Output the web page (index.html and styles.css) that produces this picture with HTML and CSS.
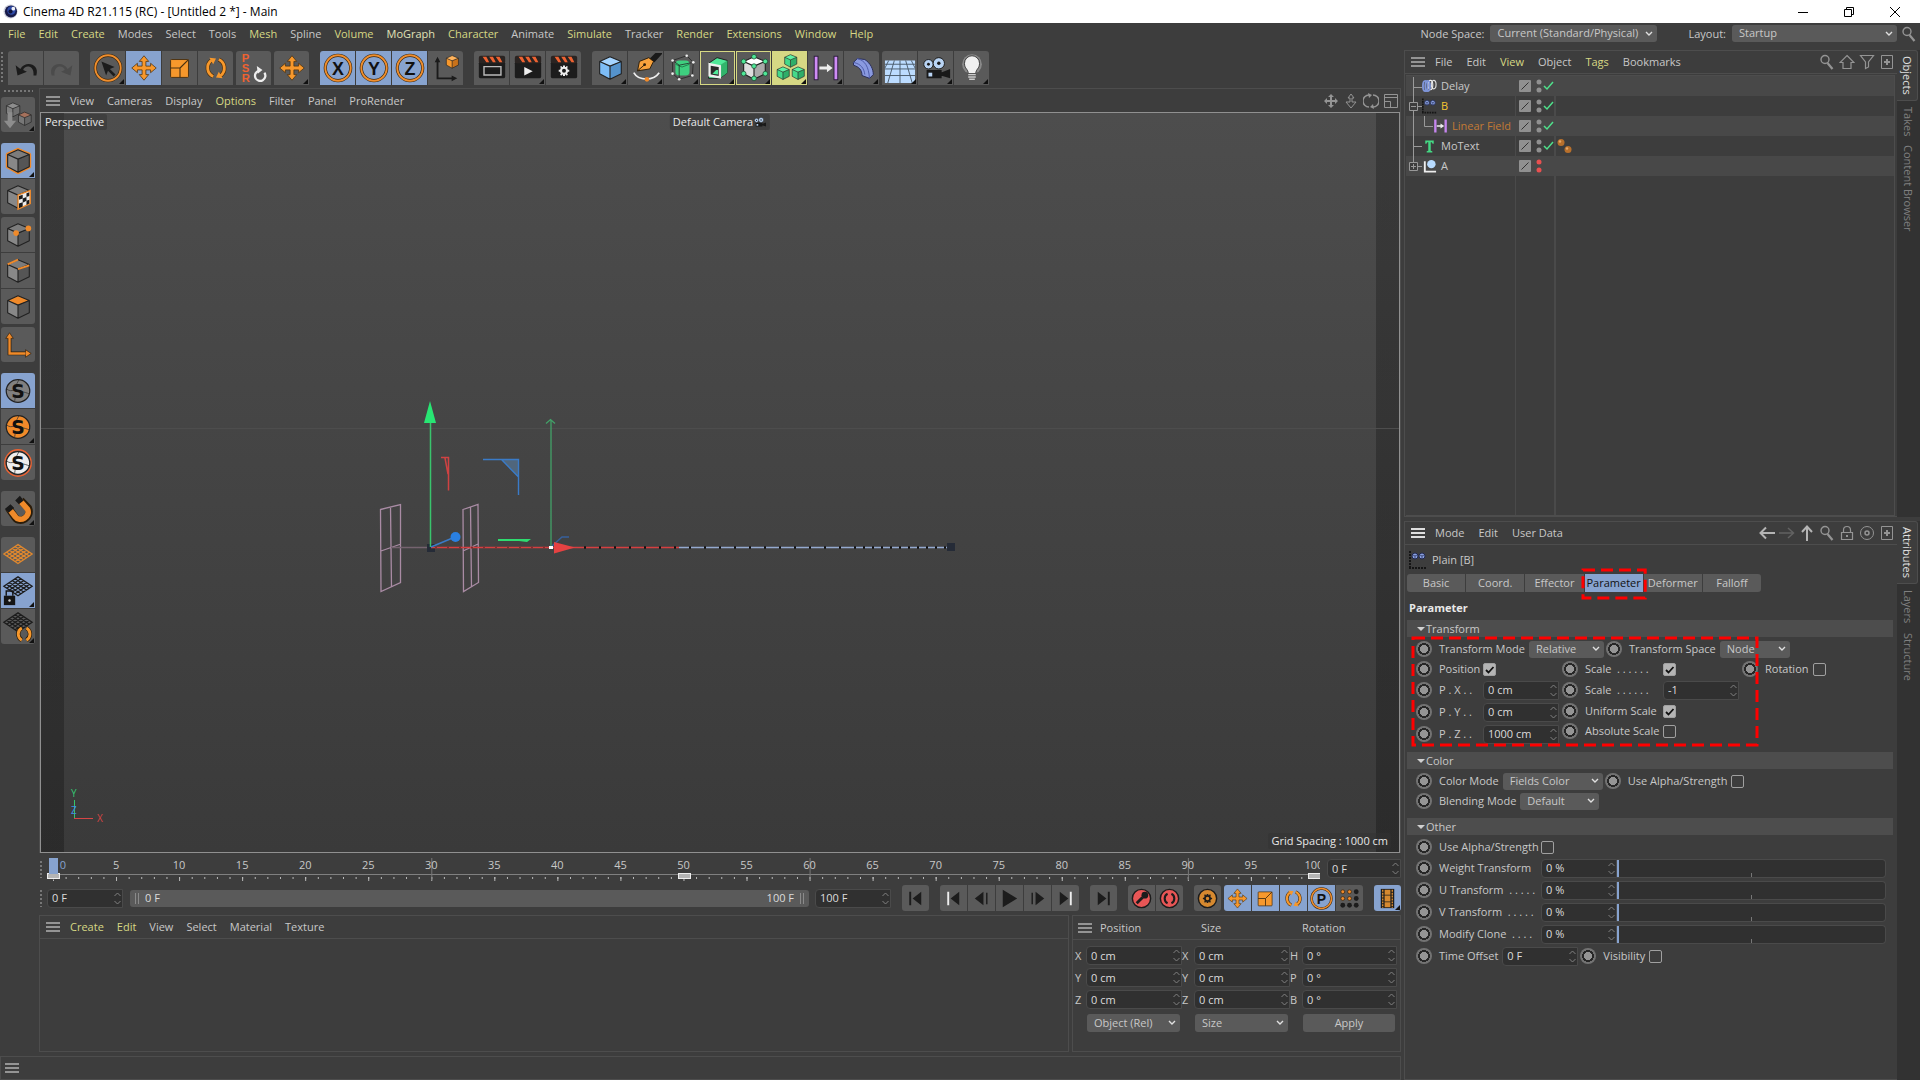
FILE: index.html
```
<!DOCTYPE html>
<html lang="en">
<head>
    <meta charset="UTF-8">
    <meta name="viewport" content="width=device-width, initial-scale=1.0">
    <title>Cinema 4D R21.115 (RC) - [Untitled 2 *] - Main</title>
    <link rel="stylesheet" href="styles.css">
</head>
<body>
    <!-- Shared icons -->
    <svg class="sprite" aria-hidden="true">
        <symbol id="cube" viewBox="0 0 34 34">
            <path d="M6 10 17 5l12 5v13l-12 6-11-6z" fill="none" stroke="var(--rim, none)" stroke-width="4" stroke-linejoin="round"/>
            <path d="M6 10 17 5l12 5-12 5z" fill="var(--top)"/>
            <path d="M6 10l11 5v14L6 23z" fill="var(--left)"/>
            <path d="M17 15l12-5v13l-12 6z" fill="var(--right)"/>
            <path d="M6 10 17 5l12 5v13l-12 6-11-6zM6 10l11 5 12-5M17 15v14" fill="none" stroke="#222" stroke-width="1.2" stroke-linejoin="round"/>
        </symbol>
        <symbol id="move" viewBox="0 0 34 34">
            <path d="M17 4l5 6h-3v5h5v-3l6 5-6 5v-3h-5v5h3l-5 6-5-6h3v-5h-5v3l-6-5 6-5v3h5v-5h-3z" fill="#f7982c" stroke="#4a3010" stroke-width=".8" stroke-linejoin="round"/>
        </symbol>
        <symbol id="scale" viewBox="0 0 34 34">
            <rect x="7" y="8" width="19" height="19" rx="1" fill="#f7982c" stroke="#4a3010"/>
            <path d="M7 17h10v10M17 17l9-9" fill="none" stroke="#4a3010" stroke-width="1.2"/>
        </symbol>
        <symbol id="rotate" viewBox="0 0 34 34">
            <path d="M14 26a10 10 0 0 1-2-17M20 8a10 10 0 0 1 2 17" fill="none" stroke="#4a3010" stroke-width="4.4"/>
            <path d="M14 26a10 10 0 0 1-2-17M20 8a10 10 0 0 1 2 17" fill="none" stroke="#f7982c" stroke-width="3"/>
            <path d="M10 6l7 1-3 6zM24 28l-7-1 3-6z" fill="#f7982c"/>
        </symbol>
        <symbol id="ring" viewBox="0 0 34 34">
            <circle cx="17" cy="17" r="13.5" fill="none" stroke="#3a2811" stroke-width="3.4"/>
            <circle cx="17" cy="17" r="13.5" fill="none" stroke="#ef8e2e" stroke-width="2"/>
        </symbol>
        <symbol id="corner" viewBox="0 0 5 5"><path d="M5 0v5H0z" fill="#111"/></symbol>
        <symbol id="clapper" viewBox="0 0 34 34">
            <rect x="3" y="10" width="28" height="18" rx="2" fill="#1c1c1c"/>
            <rect x="3" y="4" width="28" height="8" rx="2" fill="#2a2422"/>
            <path d="M7 5h4l3 6h-3zM14 5h4l3 6h-3zM21 5h4l3 6h-3z" fill="#ee6231"/>
        </symbol>
        <symbol id="gear" viewBox="0 0 20 20">
            <path d="M8.500 2h3v3h-3zM8.500 15h3v3h-3zM4 4l2-1.500 2 3-2 1.500zM12 5.500l2-3L16 4l-2 3zM2 8.500h4v3H2zM14 8.500h4v3h-4zM6 13l2 1.500-2 3L4 16zM14 13l2 3-2 1.500-2-3z"/>
            <circle cx="10" cy="10" r="4.500" fill="none" stroke="currentColor" stroke-width="3"/>
        </symbol>
        <symbol id="camera" viewBox="0 0 34 34">
            <path d="M7 19h16v9H7zM22 22l10-4v10l-10-3z" fill="#191919"/>
            <circle cx="9" cy="13" r="5" fill="#b9d4f4" stroke="#191919"/><circle cx="20" cy="12" r="6" fill="#b9d4f4" stroke="#191919"/>
            <circle cx="9" cy="13" r="1.500" fill="#191919"/><circle cx="20" cy="12" r="1.800" fill="#191919"/>
            <rect x="9" y="22" width="4" height="4" fill="#b9d4f4"/>
        </symbol>
        <symbol id="sball" viewBox="0 0 34 34">
            <circle cx="17" cy="17" r="14" fill="none" stroke="var(--halo, none)" stroke-width="1.500"/>
            <ellipse cx="17" cy="17" rx="12.500" ry="12" fill="var(--ball)" stroke="#222" stroke-width="1.300"/>
            <path d="M18 5c-2 4-3 5-3 8M5 15c3 2 5 2 8 1M21 18c3 0 5 1 8 2M14 21c0 3 0 5-1 8" fill="none" stroke="#333" stroke-width=".8"/>
        </symbol>
        <symbol id="grid" viewBox="0 0 34 34">
            <path d="M17 6l15 10-15 10L2 16zM20 8 5 18M23 10 8 20M26 12 11 22M29 14 14 24M14 8l15 10M11 10l15 10M8 12l15 10M5 14l15 10" fill="none" stroke="var(--grid, #1c1c1c)" stroke-width="1.400"/>
        </symbol>
        <symbol id="burger" viewBox="0 0 14 10"><path d="M0 1h14M0 5h14M0 9h14" stroke="currentColor" stroke-width="2"/></symbol>
        <symbol id="search" viewBox="0 0 16 16">
            <circle cx="6" cy="5.500" r="4" fill="none" stroke="currentColor" stroke-width="1.400"/><path d="M8.500 9l5 6" stroke="currentColor" stroke-width="2.200"/>
        </symbol>
        <symbol id="addbox" viewBox="0 0 16 16">
            <path d="M2.500 1.500h11v13h-11z" fill="none" stroke="currentColor"/><path d="M8 5v6M5 8h6" stroke="currentColor" stroke-width="2"/>
        </symbol>
        <symbol id="plain" viewBox="0 0 18 18">
            <path d="M1 0v18M0 17h18" stroke="#151515" stroke-width="2" stroke-dasharray="2 1"/>
            <circle cx="6" cy="5" r="3" fill="#89a0e0" stroke="#222a50"/><circle cx="13" cy="5" r="3" fill="#89a0e0" stroke="#222a50"/>
            <path d="M4 4l2 1 2-1M6 5v3M11 4l2 1 2-1M13 5v3" stroke="#222a50" stroke-width=".7" fill="none"/>
        </symbol>
        <symbol id="layer" viewBox="0 0 12 12"><rect width="12" height="12" rx="1" fill="#909090"/><path d="M2.500 9.500l7-7" stroke="#333"/></symbol>
        <symbol id="enabled" viewBox="0 0 18 14">
            <circle cx="3" cy="3" r="2.500" fill="#909090"/><circle cx="3" cy="11" r="2.500" fill="#909090"/><path d="M8 7l3 3 6-7" fill="none" stroke="#4fe08b" stroke-width="1.500"/>
        </symbol>
        <symbol id="step" viewBox="0 0 26 26"><path d="M19 6v14l-9-7z" fill="#1c1c1c"/><path d="M7.500 6v14" stroke="var(--bar, #1c1c1c)" stroke-width="2"/></symbol>
    </svg>

    <div class="app">
        <header class="titlebar">
            <svg class="logo" viewBox="0 0 16 16"><circle cx="8" cy="8" r="7.500" fill="#cdd0dc"/><circle cx="8.500" cy="8" r="6.500" fill="#171a48"/><circle cx="9" cy="7" r="4.500" fill="#2d49a6"/><circle cx="11" cy="5" r="2" fill="#f0f2fa"/><circle cx="8" cy="8" r="2.200" fill="#101338"/></svg>
            <span class="title">Cinema 4D R21.115 (RC) - [Untitled 2 *] - Main</span>
            <div class="window-buttons">
                <button aria-label="Minimize"><svg viewBox="0 0 10 10"><path d="M0 5.500h10"/></svg></button>
                <button aria-label="Restore"><svg viewBox="0 0 10 10"><path d="M.5 2.500h7v7h-7zM2.500 2.500v-2h7v7h-2"/></svg></button>
                <button aria-label="Close"><svg viewBox="0 0 10 10"><path d="M0 0l10 10M10 0 0 10"/></svg></button>
            </div>
        </header>

        <div class="menubar">
            <nav class="menu">
                <button class="used">File</button><button class="used">Edit</button><button class="used">Create</button><button>Modes</button><button>Select</button><button>Tools</button><button class="used">Mesh</button><button>Spline</button><button class="used">Volume</button><button class="used pale">MoGraph</button><button class="used">Character</button><button>Animate</button><button class="used">Simulate</button><button>Tracker</button><button class="used">Render</button><button class="used">Extensions</button><button class="used">Window</button><button class="used">Help</button>
            </nav>
            <div class="layout-bar">
                <label for="nodeSpace">Node Space:</label>
                <select id="nodeSpace" class="node-space"><option>Current (Standard/Physical)</option></select>
                <label for="layout" class="layout-label">Layout:</label>
                <select id="layout" class="layout-select"><option>Startup</option></select>
                <button class="icon" aria-label="Search"><svg><use href="#search"/></svg></button>
            </div>
        </div>

        <div class="workspace">
            <div class="left-side">
                <div class="toolbar">
                    <span class="grip tall"></span>
                    <div class="group">
                        <button aria-label="Undo"><svg viewBox="0 0 34 34"><path d="M6 14l2 11 10-4-4-2c1-5 12-6 11 6l3 0c4-13-12-16-17-7z" fill="#1b1b1b"/></svg></button>
                        <button aria-label="Redo"><svg viewBox="0 0 34 34"><path d="M28 14l-2 11-10-4 4-2c-1-5-12-6-11 6l-3 0c-4-13 12-16 17-7z" fill="#4b4b4b"/></svg></button>
                    </div>
                    <div class="group wide-gap">
                        <button aria-label="Live Selection"><svg viewBox="0 0 34 34"><use href="#ring"/><path d="M10 10l14 6-5 2 6 6-2 2-6-6-2 5z" fill="#1c1c1c"/></svg><svg class="corner"><use href="#corner"/></svg></button>
                        <button class="on" aria-label="Move"><svg><use href="#move"/></svg></button>
                        <button aria-label="Scale"><svg><use href="#scale"/></svg></button>
                        <button aria-label="Rotate"><svg><use href="#rotate"/></svg></button>
                    </div>
                    <div class="group">
                        <button aria-label="Reset PSR"><svg viewBox="0 0 34 34"><g class="psr"><text x="4" y="11">P</text><text x="4" y="21">S</text><text x="4" y="32">R</text></g><path d="M22 20a5.500 5.500 0 1 0 6 2" fill="none" stroke="#eee" stroke-width="2.400"/><path d="M20 15l6 4-5 4z" fill="#eee"/></svg></button>
                    </div>
                    <div class="group">
                        <button aria-label="Last Tool"><svg><use href="#move"/></svg><svg class="corner"><use href="#corner"/></svg></button>
                    </div>
                    <div class="group wide-gap">
                        <button class="on" aria-label="X Axis"><svg viewBox="0 0 34 34"><use href="#ring"/><text class="axis-letter" x="17" y="24">X</text></svg></button>
                        <button class="on" aria-label="Y Axis"><svg viewBox="0 0 34 34"><use href="#ring"/><text class="axis-letter" x="17" y="24">Y</text></svg></button>
                        <button class="on" aria-label="Z Axis"><svg viewBox="0 0 34 34"><use href="#ring"/><text class="axis-letter" x="17" y="24">Z</text></svg></button>
                        <button aria-label="Coordinate System"><svg viewBox="0 0 34 34"><path d="M8 10v18h16" fill="none" stroke="#1b1b1b" stroke-width="2"/><path d="M8 5l3 6H5zM29 28l-6-3v6z" fill="#1b1b1b"/><svg class="cube-orange" x="14" y="1" width="19" height="19"><use href="#cube"/></svg></svg></button>
                    </div>
                    <div class="group wide-gap">
                        <button aria-label="Render View"><svg viewBox="0 0 34 34"><use href="#clapper"/><path d="M8.500 15.500h18v9h-18z" fill="none" stroke="#bbb" stroke-width="1.500"/></svg></button>
                        <button aria-label="Render to Picture Viewer"><svg viewBox="0 0 34 34"><use href="#clapper"/><path d="M13 16v9l9-4.500z" fill="#eee"/></svg><svg class="corner"><use href="#corner"/></svg></button>
                        <button class="light-gear" aria-label="Render Settings"><svg viewBox="0 0 34 34"><use href="#clapper"/><use href="#gear" x="10" y="13" width="14" height="14"/></svg></button>
                    </div>
                    <div class="group wide-gap">
                        <button class="cube-blue" aria-label="Cube"><svg><use href="#cube"/></svg><svg class="corner"><use href="#corner"/></svg></button>
                        <button aria-label="Pen"><svg viewBox="0 0 34 34"><path d="M20 8l7-7h8l-9 10z" fill="#191919"/><path d="M8 20l2-10 10-4 5 4-4 8z" fill="#f7a13c" stroke="#2a1c0a"/><path d="M8 20l7-6" stroke="#2a1c0a"/><circle cx="15.500" cy="13.500" r="1.500" fill="#2a1c0a"/><path d="M4 22c5 9 21 9 27 0" fill="none" stroke="#eee" stroke-width="1.800"/><circle cx="18" cy="29" r="2.500" fill="#f08a2a"/></svg><svg class="corner"><use href="#corner"/></svg></button>
                        <button class="cube-green" aria-label="Subdivision Surface"><svg viewBox="0 0 34 34"><rect x="10" y="9" width="15" height="16" rx="4" fill="#3ecf7f"/><path d="M10 13l7 3 8-3" fill="none" stroke="#1d7f49"/><path d="M7 9l15-5 7 7-1 14-14 4-7-6zM7 9l7 5 15-3M14 14v15" fill="none" stroke="#222" stroke-width=".8"/><g fill="#eee"><circle cx="7" cy="9" r="1.400"/><circle cx="22" cy="4" r="1.400"/><circle cx="29" cy="11" r="1.400"/><circle cx="28" cy="25" r="1.400"/><circle cx="14" cy="29" r="1.400"/><circle cx="7" cy="23" r="1.400"/></g></svg><svg class="corner"><use href="#corner"/></svg></button>
                        <button class="cube-green hot" aria-label="Extrude"><svg viewBox="0 0 34 34"><path d="M7 12l9-6 11 3v13l-8 6H7z" fill="#4fe898" stroke="#1c1c1c"/><path d="M19 14l8-5v13l-8 6z" fill="#32b46c"/><path d="M8 13l11 2v12L8 25z" fill="#2a2a2a" stroke="#eee" stroke-width="2.500"/><path d="M11 23l4-4h2v5z" fill="#4fe898"/></svg><svg class="corner"><use href="#corner"/></svg></button>
                        <button class="cube-white hot" aria-label="Lattice"><svg viewBox="0 0 34 34"><use href="#cube"/><g fill="#4fe898" stroke="#1d4a30" stroke-width=".8"><circle cx="17" cy="5" r="2.500"/><circle cx="6" cy="10" r="2.500"/><circle cx="29" cy="10" r="2.500"/><circle cx="17" cy="15" r="2.500"/><circle cx="6" cy="23" r="2.500"/><circle cx="29" cy="23" r="2.500"/><circle cx="17" cy="28" r="2.500"/></g></svg><svg class="corner"><use href="#corner"/></svg></button>
                        <button class="cube-green hot filled" aria-label="Cloner"><svg viewBox="0 0 34 34"><use href="#cube" x="8" y="0" width="19" height="19"/><use href="#cube" x="0" y="13" width="19" height="19"/><use href="#cube" x="16" y="13" width="19" height="19"/></svg><svg class="corner"><use href="#corner"/></svg></button>
                        <button aria-label="Linear Field"><svg viewBox="0 0 34 34"><path d="M6.500 4v26M27.500 4v26" stroke="#2a1c38" stroke-width="5"/><path d="M6.500 5v24M27.500 5v24" stroke="#cf8cf5" stroke-width="3"/><path d="M10 15.500h8v-3l6 4.500-6 4.500v-3h-8z" fill="#eee"/></svg><svg class="corner"><use href="#corner"/></svg></button>
                        <button aria-label="Bend"><svg viewBox="0 0 34 34"><path d="M8 11l4-4 8 1c6 4 9 10 9 16l-4 4-8-3c0-6-3-9-9-11z" fill="#8a9ae0" stroke="#262b55"/><path d="M12 7c8 2 12 8 13 21M8 11c8 2 11 6 12 13" fill="none" stroke="#4c5aa8"/></svg><svg class="corner"><use href="#corner"/></svg></button>
                    </div>
                    <div class="group">
                        <button aria-label="Floor"><svg viewBox="0 0 34 34"><path d="M1 9h32v24H1z" fill="#bcdcff"/><path d="M1 13h32M1 18h32M1 25h32M17 9v24M11 9 4 33M23 9l7 24M5 9 1 17M29 9l4 8" stroke="#4a5a6a" fill="none"/></svg><svg class="corner"><use href="#corner"/></svg></button>
                        <button aria-label="Camera"><svg><use href="#camera"/></svg><svg class="corner"><use href="#corner"/></svg></button>
                        <button aria-label="Light"><svg viewBox="0 0 34 34"><circle cx="17" cy="13" r="10.500" fill="#8a8a8a"/><path d="M17 4a8 8 0 0 0-8 8c0 6 4 6 4 11h8c0-5 4-5 4-11a8 8 0 0 0-8-8z" fill="#f0f0f0" stroke="#3a3a3a"/><path d="M13 24h8M13 26.500h8M14 29h6" stroke="#ccc" stroke-width="1.500"/></svg><svg class="corner"><use href="#corner"/></svg></button>
                    </div>
                </div>

                <div class="work-row">
                    <aside class="tools">
                        <span class="grip wide"></span>
                        <div class="group apart">
                            <button class="cube-dim" aria-label="Make Editable"><svg viewBox="0 0 34 34"><use href="#cube" x="1" y="1" width="21" height="21"/><path d="M6 14h5v9h4l-6.500 8L2 23h4z" fill="#8d8d8d"/><g class="cube-faded"><use href="#cube" x="14" y="11" width="20" height="20"/></g></svg><svg class="corner"><use href="#corner"/></svg></button>
                        </div>
                        <div class="group">
                            <button class="on cube-rim" aria-label="Model"><svg><use href="#cube"/></svg><svg class="corner"><use href="#corner"/></svg></button>
                            <button aria-label="Texture"><svg viewBox="0 0 34 34"><use href="#cube"/><path d="M17 15l13-5v14l-13 6z" fill="#eee" stroke="#f08a2a" stroke-width="1.500"/><path d="M18 16l4-1.500v4L18 20zM26 13l3-1v4l-3 1zM22 18.500l4-1.500v4l-4 2zM18 24l4-1.500V27l-4 2zM26 21l3-1v4l-3 1.500z" fill="#1c1c1c"/></svg></button>
                        </div>
                        <div class="group">
                            <button aria-label="Points"><svg viewBox="0 0 34 34"><use href="#cube"/><circle cx="15" cy="15" r="3" fill="#f08a2a"/><circle cx="28" cy="10" r="3" fill="#f08a2a"/></svg></button>
                            <button aria-label="Edges"><svg viewBox="0 0 34 34"><use href="#cube"/><path d="M6 10l11-5M17 15l12-4" stroke="#f08a2a" stroke-width="2"/></svg></button>
                            <button class="cube-top" aria-label="Polygons"><svg><use href="#cube"/></svg></button>
                        </div>
                        <div class="group apart">
                            <button aria-label="Enable Axis"><svg viewBox="0 0 34 34"><path d="M8 9v17h17" fill="none" stroke="#2a1c0a" stroke-width="4"/><path d="M8 4l4 6H4zM31 26l-6-4v8z" fill="#f08a2a" stroke="#2a1c0a" stroke-width=".7"/><path d="M8 9v17h17" fill="none" stroke="#f08a2a" stroke-width="2.500"/></svg></button>
                        </div>
                        <div class="group apart">
                            <button class="on ball-gray" aria-label="Solo Off"><svg viewBox="0 0 34 34"><use href="#sball"/><text class="solo" x="17" y="24">S</text></svg></button>
                            <button class="ball-orange" aria-label="Solo Single"><svg viewBox="0 0 34 34"><use href="#sball"/><text class="solo" x="17" y="24">S</text></svg><svg class="corner"><use href="#corner"/></svg></button>
                            <button class="ball-white" aria-label="Solo Selection"><svg viewBox="0 0 34 34"><use href="#sball"/><text class="solo" x="17" y="24">S</text></svg></button>
                        </div>
                        <div class="group apart">
                            <button aria-label="Snap"><svg viewBox="0 0 34 34"><path d="M7 16l7 10c5 7 18 0 14-10l-8-8" fill="none" stroke="#2a1c0a" stroke-width="8"/><path d="M7 16l7 9c5 7 17 0 13-8l-8-9" fill="none" stroke="#f08a2a" stroke-width="6"/><path d="M3 17l6-5 4 4-6 5zM14 8l5-5 4 5-5 4z" fill="#191919"/></svg><svg class="corner"><use href="#corner"/></svg></button>
                        </div>
                        <div class="group">
                            <button class="grid-orange" aria-label="Workplane"><svg><use href="#grid"/></svg></button>
                            <button class="on" aria-label="Lock Workplane"><svg viewBox="0 0 34 34"><use href="#grid" y="-4"/><rect x="2" y="22" width="12" height="10" fill="#151515"/><path d="M4.500 22v-5h7v5" fill="none" stroke="#151515" stroke-width="1.500"/><circle cx="8" cy="27" r="1.300" fill="#ccc"/></svg><svg class="corner"><use href="#corner"/></svg></button>
                            <button aria-label="Align Workplane"><svg viewBox="0 0 34 34"><use href="#grid" y="-4"/><path d="M21 18c-5 3-5 10 0 13M26 18c5 3 5 10 0 13" fill="none" stroke="#2a1c0a" stroke-width="4.500"/><path d="M21 18c-5 3-5 10 0 13M26 18c5 3 5 10 0 13" fill="none" stroke="#f7982c" stroke-width="3"/></svg><svg class="corner"><use href="#corner"/></svg></button>
                        </div>
                    </aside>

                    <main class="centre">
                        <section class="view-panel">
                            <div class="panel-head">
                                <svg class="burger"><use href="#burger"/></svg>
                                <nav class="menu"><button>View</button><button>Cameras</button><button>Display</button><button class="used">Options</button><button>Filter</button><button>Panel</button><button>ProRender</button></nav>
                                <div class="head-icons">
                                    <button class="icon" aria-label="Pan"><svg viewBox="0 0 16 16"><path d="M8 1l3 3H9v3h3V5l3 3-3 3V9H9v3h2l-3 3-3-3h2V9H4v2L1 8l3-3v2h3V4H5z" fill="currentColor"/></svg></button>
                                    <button class="icon" aria-label="Zoom"><svg viewBox="0 0 16 16"><path d="M8 1l3 4H9v4h4l-5 6-5-6h4V5H5z" fill="none" stroke="currentColor"/></svg></button>
                                    <button class="icon" aria-label="Orbit"><svg viewBox="0 0 16 16"><path d="M6 14a6 6 0 0 1 0-12M10 2a6 6 0 0 1 0 12" fill="none" stroke="currentColor" stroke-width="1.500"/><path d="M5 0l4 2-3 3zM11 16l-4-2 3-3z" fill="currentColor"/></svg></button>
                                    <button class="icon" aria-label="Maximize"><svg viewBox="0 0 16 16"><path d="M1.500 1.500h13v13h-13zM1.500 4.500h13M1.500 8.500h6v6" fill="none" stroke="currentColor"/></svg></button>
                                </div>
                            </div>
                            <div class="viewport">
                                <!-- scene drawing, one unit is one pixel from the viewport's corner -->
                                <svg class="scene">
                                    <path d="M0 315.500h1500" stroke="#4d4d4d"/>
                                    <g fill="none" stroke="#a98ba4" stroke-width="1.300">
                                        <path d="M339.500 396.500l20-5v78l-19.500 9zM349.500 394l1 80M340 438l20-7"/>
                                        <path d="M422 396.500l15-5 .5 78-15 9zM429.500 394l1 80M422 438l15-7"/>
                                        <path d="M350 434.500h37" stroke="#75636f"/>
                                    </g>
                                    <path d="M386 431h8v8h-8zM906 430h8v8h-8z" fill="#252b37"/>
                                    <path d="M638 434.500h268" stroke="#94a9cf" stroke-width="1.500"/>
                                    <path d="M390 434.500h248" stroke="#d63f40" stroke-width="1.500"/>
                                    <path d="M394 434.500h120" stroke="#802f30" stroke-width="2" stroke-dasharray="2 10"/>
                                    <path d="M543 434.500h270" stroke="#111" stroke-width="2.500" stroke-dasharray="2 13"/>
                                    <path d="M813 434.500h93" stroke="#111" stroke-width="2.500" stroke-dasharray="2 7"/>
                                    <path d="M389.500 434V310" stroke="#39c46c" stroke-width="1.500"/>
                                    <path d="M389 288l6 22h-12z" fill="#28e573"/>
                                    <path d="M510 433V307M505 310.500l4.500-4 4.500 4" fill="none" stroke="#42a168" stroke-width="1.300"/>
                                    <path d="M400 344.500h7.500v33M404 345l3 16" fill="none" stroke="#d04242" stroke-width="1.500"/>
                                    <path d="M460.500 346.500h17V364z" fill="#50667c"/>
                                    <path d="M442 346.500h35.500V382M460.500 346.500 477.500 364" fill="none" stroke="#3a7bc8" stroke-width="1.400"/>
                                    <path d="M390 434l24-10" stroke="#3a7bc8" stroke-width="1.500"/><circle cx="414.500" cy="424" r="5" fill="#2a80e2"/>
                                    <path d="M457 426h33l-4 3-8-1h-21z" fill="#2edc70"/>
                                    <path d="M511 433l10-9h7" fill="none" stroke="#37609c" stroke-width="1.500"/>
                                    <path d="M513 429l21 5.500-21 6z" fill="#e64242"/>
                                    <path d="M508 433h4v3h-4z" fill="#fff"/>
                                </svg>
                                <span class="hud name">Perspective</span>
                                <span class="hud camera">Default Camera<svg><use href="#camera"/></svg></span>
                                <span class="hud spacing">Grid Spacing : 1000 cm</span>
                                <svg class="axes" viewBox="0 0 44 48"><path d="M9.500 16v19" stroke="#35c46c"/><path d="M9 34.500h19" stroke="#d64545"/><text x="6" y="13" fill="#35c873">Y</text><text x="6" y="30" fill="#3f8ee6">Z</text><text x="32" y="38" fill="#d64545">X</text></svg>
                            </div>
                        </section>

                        <div class="timeline">
                            <span class="grip tall small"></span>
                            <div class="ruler-clip">
                                <div class="ruler">
                                    <span class="first">0</span><span>5</span><span>10</span><span>15</span><span>20</span><span>25</span><span>30</span><span>35</span><span>40</span><span>45</span><span>50</span><span>55</span><span>60</span><span>65</span><span>70</span><span>75</span><span>80</span><span>85</span><span>90</span><span>95</span><span>100</span>
                                    <i class="marker start"></i><i class="marker mid"></i><i class="marker end"></i><i class="playhead"></i>
                                </div>
                            </div>
                            <input class="field" aria-label="Current frame" value="0 F">
                        </div>

                        <div class="transport">
                            <span class="grip tall small"></span>
                            <input class="field" aria-label="Start frame" value="0 F">
                            <div class="range-bar"><i></i><span>0 F</span><span class="last">100 F</span><i></i></div>
                            <input class="field" aria-label="End frame" value="100 F">
                            <div class="play-groups">
                                <div class="group"><button aria-label="Go to Start"><svg><use href="#step"/></svg></button></div>
                                <div class="group">
                                    <button class="key-step" aria-label="Previous Key"><svg><use href="#step"/></svg></button>
                                    <button aria-label="Previous Frame"><svg viewBox="0 0 26 26"><path d="M15 6v14l-9-7z" fill="#1c1c1c"/><path d="M18.500 7v12" stroke="#1c1c1c" stroke-width="1.500"/></svg></button>
                                    <button aria-label="Play"><svg viewBox="0 0 26 26"><path d="M6 4v18l15-9z" fill="#1c1c1c"/></svg></button>
                                    <button aria-label="Next Frame"><svg viewBox="0 0 26 26"><path d="M11 6v14l9-7z" fill="#1c1c1c"/><path d="M7.500 7v12" stroke="#1c1c1c" stroke-width="1.500"/></svg></button>
                                    <button class="key-step flip" aria-label="Next Key"><svg><use href="#step"/></svg></button>
                                </div>
                                <div class="group"><button class="flip" aria-label="Go to End"><svg><use href="#step"/></svg></button></div>
                                <div class="group">
                                    <button aria-label="Record"><svg viewBox="0 0 26 26"><circle cx="13" cy="13" r="9.500" fill="#e85656" stroke="#1c1c1c" stroke-width="1.500"/><path d="M8 18l6-6" stroke="#1c1c1c" stroke-width="3"/><circle cx="16.500" cy="9.500" r="3.500" fill="#1c1c1c"/></svg></button>
                                    <button aria-label="Autokeying"><svg viewBox="0 0 26 26"><circle cx="13" cy="13" r="9.500" fill="#e85656" stroke="#1c1c1c" stroke-width="1.500"/><path d="M11 8c-4 2-4 8 0 10M15 8c4 2 4 8 0 10" fill="none" stroke="#1c1c1c" stroke-width="2.200"/></svg></button>
                                </div>
                                <div class="group"><button class="dark-gear" aria-label="Keyframe Selection"><svg viewBox="0 0 26 26"><circle cx="13" cy="13" r="9.500" fill="#d6892f" stroke="#1c1c1c" stroke-width="1.500"/><use href="#gear" x="7" y="7" width="12" height="12"/></svg></button></div>
                                <div class="group tight">
                                    <button class="on" aria-label="Position"><svg><use href="#move"/></svg></button>
                                    <button class="on" aria-label="Scale"><svg><use href="#scale"/></svg></button>
                                    <button class="on" aria-label="Rotation"><svg><use href="#rotate"/></svg></button>
                                    <button class="on" aria-label="Parameter"><svg viewBox="0 0 34 34"><use href="#ring"/><text class="axis-letter" x="17" y="24">P</text></svg></button>
                                    <button aria-label="Point Level Animation"><svg viewBox="0 0 26 26"><g fill="#1c1c1c"><circle cx="20" cy="6" r="2.500"/><circle cx="20" cy="13" r="2.500"/><circle cx="20" cy="20" r="2.500"/><circle cx="13" cy="20" r="2.500"/><circle cx="6" cy="20" r="2.500"/></g><g fill="#f08a2a" stroke="#2a1c0a" stroke-width=".7"><circle cx="6" cy="6" r="2"/><circle cx="13" cy="6" r="2"/><circle cx="6" cy="13" r="2"/><circle cx="13" cy="13" r="2"/></g></svg></button>
                                </div>
                                <div class="group"><button class="on" aria-label="Timeline"><svg viewBox="0 0 26 26"><rect x="6" y="3" width="14" height="20" fill="#1c1c1c"/><path d="M10 4h6v5h-6zM10 10h6v6h-6zM10 17h6v5h-6z" fill="#d6892f"/><path d="M8 4v19M18 4v19" stroke="#d6892f" stroke-width="1.500" stroke-dasharray="2 1"/></svg><svg class="corner"><use href="#corner"/></svg></button></div>
                            </div>
                        </div>

                        <div class="managers">
                            <section class="materials">
                                <div class="panel-head">
                                    <svg class="burger"><use href="#burger"/></svg>
                                    <nav class="menu"><button class="used">Create</button><button class="used">Edit</button><button>View</button><button>Select</button><button>Material</button><button>Texture</button></nav>
                                </div>
                            </section>
                            <section class="coords">
                                <div class="coords-head"><svg class="burger"><use href="#burger"/></svg><span>Position</span><span>Size</span><span>Rotation</span></div>
                                <div class="coords-grid">
                                    <label for="px">X</label><input id="px" class="field" value="0 cm">
                                    <label for="sx">X</label><input id="sx" class="field" value="0 cm">
                                    <label for="rh">H</label><input id="rh" class="field" value="0 °">
                                    <label for="py">Y</label><input id="py" class="field" value="0 cm">
                                    <label for="sy">Y</label><input id="sy" class="field" value="0 cm">
                                    <label for="rp">P</label><input id="rp" class="field" value="0 °">
                                    <label for="pz">Z</label><input id="pz" class="field" value="0 cm">
                                    <label for="sz">Z</label><input id="sz" class="field" value="0 cm">
                                    <label for="rb">B</label><input id="rb" class="field" value="0 °">
                                    <select class="cell-2" aria-label="Position mode"><option>Object (Rel)</option></select>
                                    <select class="cell-4" aria-label="Size mode"><option>Size</option></select>
                                    <button class="cell-6 apply">Apply</button>
                                </div>
                            </section>
                        </div>
                    </main>
                </div>
                <footer class="statusbar"><svg class="burger"><use href="#burger"/></svg></footer>
            </div>

            <div class="right-side">
                <div class="dock objects-dock">
                    <section class="panel">
                        <div class="panel-head">
                            <svg class="burger"><use href="#burger"/></svg>
                            <nav class="menu"><button>File</button><button>Edit</button><button class="used">View</button><button>Object</button><button class="used">Tags</button><button>Bookmarks</button></nav>
                            <div class="head-icons">
                                <button class="icon" aria-label="Search"><svg><use href="#search"/></svg></button>
                                <button class="icon" aria-label="Home"><svg viewBox="0 0 16 16"><path d="M8 1.500l7 7h-3v6H4v-6H1z" fill="none" stroke="currentColor" stroke-width="1.200"/></svg></button>
                                <button class="icon" aria-label="Filter"><svg viewBox="0 0 16 16"><path d="M1.500 1.500h13L9.500 8v5l-3 1.500V8z" fill="none" stroke="currentColor" stroke-width="1.200"/></svg></button>
                                <button class="icon" aria-label="New Panel"><svg><use href="#addbox"/></svg></button>
                            </div>
                        </div>
                        <ul class="tree">
                            <li><div class="node"><svg class="branch" viewBox="0 0 16 20"><path d="M7.500 1v19M8 11.500h8"/></svg><svg class="obj" viewBox="0 0 16 16"><g fill="none" stroke-width="2"><ellipse cx="12.500" cy="6.500" rx="2.500" ry="4.500" stroke="#ddd" stroke-width="1.200"/><ellipse cx="9" cy="7" rx="2.500" ry="5" stroke="#eee" stroke-width="1.200"/><ellipse cx="6" cy="8" rx="2.500" ry="5.500" stroke="#7f96da"/><ellipse cx="3.500" cy="8" rx="2.500" ry="5.500" stroke="#7f96da"/></g></svg><span>Delay</span></div><svg class="layer"><use href="#layer"/></svg><svg class="flags"><use href="#enabled"/></svg></li>
                            <li><div class="node"><svg class="branch" viewBox="0 0 16 20"><path d="M7.500 0v20M12 10.500h4"/><path class="box" d="M3.500 6.500h8v8h-8z"/><path d="M5 10.500h5"/></svg><svg class="obj"><use href="#plain"/></svg><span class="active">B</span></div><svg class="layer"><use href="#layer"/></svg><svg class="flags"><use href="#enabled"/></svg></li>
                            <li><div class="node"><svg class="branch deep" viewBox="0 0 27 20"><path d="M7.500 0v20M18.500 0v10.500H27"/></svg><svg class="obj" viewBox="0 0 16 16"><path d="M2.500 1v14M13.500 1v14" stroke="#c585ee" stroke-width="2.500"/><path d="M4 7.300h4v-2l4 2.700-4 2.700v-2H4z" fill="#eee"/></svg><span class="field-name">Linear Field</span></div><svg class="layer"><use href="#layer"/></svg><svg class="flags"><use href="#enabled"/></svg></li>
                            <li><div class="node"><svg class="branch" viewBox="0 0 16 20"><path d="M7.500 0v20M8 10.500h8"/></svg><svg class="obj" viewBox="0 0 16 16"><path d="M3.500 2h9v3.500h-1.200L10.500 4H9.300v9l1.700.500V15H5v-1.500l1.700-.500V4H5.500l-.800 1.500H3.500z" fill="#45d884"/></svg><span>MoText</span></div><svg class="layer"><use href="#layer"/></svg><svg class="flags"><use href="#enabled"/></svg><svg class="tag" viewBox="0 0 16 16"><circle cx="4" cy="4.500" r="3.500" fill="#b8702c"/><circle cx="11" cy="11.500" r="3.500" fill="#b8702c"/><circle cx="3" cy="3.500" r="1.200" fill="#e8a868"/><circle cx="10" cy="10.500" r="1.200" fill="#e8a868"/></svg></li>
                            <li><div class="node"><svg class="branch" viewBox="0 0 16 20"><path d="M7.500 0v6M12 10.500h4"/><path class="box" d="M3.500 6.500h8v8h-8z"/><path d="M5 10.500h5M7.500 8v5"/></svg><svg class="obj" viewBox="0 0 16 16"><path d="M3 3v11h12" fill="none" stroke="#eee" stroke-width="2"/><circle cx="10" cy="6" r="4.500" fill="#b8dbff"/></svg><span>A</span></div><svg class="layer"><use href="#layer"/></svg><svg class="flags" viewBox="0 0 18 14"><circle cx="3" cy="3" r="2.500" fill="#e85050"/><circle cx="3" cy="11" r="2.500" fill="#e85050"/></svg></li>
                        </ul>
                    </section>
                    <nav class="side-tabs"><button class="current">Objects</button><button>Takes</button><button>Content Browser</button></nav>
                </div>

                <div class="dock attributes-dock">
                    <section class="panel">
                        <div class="panel-head">
                            <svg class="burger bright"><use href="#burger"/></svg>
                            <nav class="menu"><button>Mode</button><button>Edit</button><button>User Data</button></nav>
                            <div class="head-icons">
                                <button class="icon bright" aria-label="Back"><svg viewBox="0 0 16 16"><path d="M16 8H1M7 2.500 1.500 8 7 13.500" fill="none" stroke="currentColor" stroke-width="2"/></svg></button>
                                <button class="icon dim" aria-label="Forward"><svg viewBox="0 0 16 16"><path d="M0 8h14M9 3l5.500 5L9 13" fill="none" stroke="currentColor" stroke-width="1.500"/></svg></button>
                                <button class="icon bright" aria-label="Up"><svg viewBox="0 0 16 16"><path d="M8 16V2M3 7l5-5.500L13 7" fill="none" stroke="currentColor" stroke-width="2"/></svg></button>
                                <button class="icon" aria-label="Search"><svg><use href="#search"/></svg></button>
                                <button class="icon" aria-label="Lock"><svg viewBox="0 0 16 16"><path d="M2.500 7.500h11v7h-11zM4.500 7V5a3.500 3.500 0 0 1 7 0v2" fill="none" stroke="currentColor" stroke-width="1.200"/><path d="M7 10h2v2H7z" fill="currentColor"/></svg></button>
                                <button class="icon" aria-label="Target"><svg viewBox="0 0 16 16"><circle cx="8" cy="8" r="6.500" fill="none" stroke="currentColor"/><circle cx="8" cy="8" r="2" fill="none" stroke="currentColor" stroke-width="1.500"/></svg></button>
                                <button class="icon" aria-label="New Panel"><svg><use href="#addbox"/></svg></button>
                            </div>
                        </div>
                        <div class="object-name"><svg><use href="#plain"/></svg>Plain [B]</div>
                        <nav class="tabs">
                            <button>Basic</button><button>Coord.</button><button>Effector</button><button class="current">Parameter<svg class="callout"><rect x="2" y="2"/></svg></button><button>Deformer</button><button>Falloff</button>
                        </nav>
                        <h2>Parameter</h2>

                        <h3>Transform</h3>
                        <div class="block">
                            <div class="line">
                                <button class="key" aria-label="Key"></button><label for="tmode">Transform Mode</label><select id="tmode" class="w-relative"><option>Relative</option></select>
                                <button class="key" aria-label="Key"></button><label for="tspace">Transform Space</label><select id="tspace" class="w-node"><option>Node</option></select>
                            </div>
                            <div class="columns">
                                <div class="col-a">
                                    <div class="line"><button class="key" aria-label="Key"></button><label for="pos" class="name-s">Position</label><input id="pos" type="checkbox" checked></div>
                                    <div class="line tall"><button class="key" aria-label="Key"></button><label for="ppx" class="name-s">P . X . .</label><input id="ppx" class="field" value="0 cm"></div>
                                    <div class="line tall"><button class="key" aria-label="Key"></button><label for="ppy" class="name-s">P . Y . .</label><input id="ppy" class="field" value="0 cm"></div>
                                    <div class="line tall"><button class="key" aria-label="Key"></button><label for="ppz" class="name-s">P . Z . .</label><input id="ppz" class="field" value="1000 cm"></div>
                                </div>
                                <div class="col-b">
                                    <div class="line"><button class="key" aria-label="Key"></button><label for="sc" class="name-m">Scale&nbsp; . . . . . .</label><input id="sc" type="checkbox" checked></div>
                                    <div class="line tall"><button class="key" aria-label="Key"></button><label for="scv" class="name-m">Scale&nbsp; . . . . . .</label><input id="scv" class="field" value="-1"></div>
                                    <div class="line"><button class="key" aria-label="Key"></button><label for="us" class="name-m">Uniform Scale</label><input id="us" type="checkbox" checked></div>
                                    <div class="line"><button class="key" aria-label="Key"></button><label for="as" class="name-m">Absolute Scale</label><input id="as" type="checkbox"></div>
                                </div>
                                <div class="col-c">
                                    <div class="line"><button class="key" aria-label="Key"></button><label for="rot">Rotation</label><input id="rot" type="checkbox"></div>
                                </div>
                            </div>
                            <svg class="callout"><rect x="2" y="2"/></svg>
                        </div>

                        <h3>Color</h3>
                        <div class="block">
                            <div class="line">
                                <button class="key" aria-label="Key"></button><label for="cmode">Color Mode</label><select id="cmode" class="w-fields"><option>Fields Color</option></select>
                                <button class="key" aria-label="Key"></button><label for="cua">Use Alpha/Strength</label><input id="cua" type="checkbox">
                            </div>
                            <div class="line"><button class="key" aria-label="Key"></button><label for="bmode">Blending Mode</label><select id="bmode" class="w-default"><option>Default</option></select></div>
                        </div>

                        <h3>Other</h3>
                        <div class="block">
                            <div class="line"><button class="key" aria-label="Key"></button><label for="oua" class="name-l">Use Alpha/Strength</label><input id="oua" type="checkbox"></div>
                            <div class="line tall"><button class="key" aria-label="Key"></button><label for="wt" class="name-l">Weight Transform</label><input id="wt" class="field" value="0 %"><input type="range" aria-label="Weight Transform" value="0"></div>
                            <div class="line tall"><button class="key" aria-label="Key"></button><label for="ut" class="name-l">U Transform&nbsp; . . . . .</label><input id="ut" class="field" value="0 %"><input type="range" aria-label="U Transform" value="0"></div>
                            <div class="line tall"><button class="key" aria-label="Key"></button><label for="vt" class="name-l">V Transform&nbsp; . . . . .</label><input id="vt" class="field" value="0 %"><input type="range" aria-label="V Transform" value="0"></div>
                            <div class="line tall"><button class="key" aria-label="Key"></button><label for="mc" class="name-l">Modify Clone&nbsp; . . . .</label><input id="mc" class="field" value="0 %"><input type="range" aria-label="Modify Clone" value="0"></div>
                            <div class="line tall"><button class="key" aria-label="Key"></button><label for="to">Time Offset</label><input id="to" class="field" value="0 F"><button class="key" aria-label="Key"></button><label for="vis">Visibility</label><input id="vis" type="checkbox"></div>
                        </div>
                    </section>
                    <nav class="side-tabs"><button class="current">Attributes</button><button>Layers</button><button>Structure</button></nav>
                </div>
            </div>
        </div>
    </div>
</body>
</html>
```
FILE: styles.css
```
* {
    box-sizing: border-box;
}
body {
    margin: 0;
    background-color: #3d3d3d;
    color: #c8c8c8;
    font-family: "Open Sans", "Noto Sans", sans-serif;
    font-size: 11px;
    line-height: 16px;
}
button, input, select {
    font: inherit;
    color: inherit;
    margin: 0;
    padding: 0;
    border: none;
    background: none;
    border-radius: 0;
}
svg {
    display: block;
    flex-shrink: 0;
}
.sprite {
    display: none;
}
.app {
    display: flex;
    flex-direction: column;
    height: 100vh;
    overflow: hidden;
}

/* Title bar */
.titlebar {
    display: flex;
    align-items: center;
    height: 23px;
    flex-shrink: 0;
    padding-left: 3px;
    background-color: #fff;
    color: #000;
    font-size: 12px;
}
.logo {
    width: 15px;
    height: 15px;
    margin-right: 5px;
}
.window-buttons {
    display: flex;
    margin-left: auto;
    padding-right: 2px;
}
.window-buttons button {
    display: grid;
    place-items: center;
    width: 46px;
    height: 20px;
}
.window-buttons svg {
    width: 10px;
    height: 10px;
    fill: none;
    stroke: #000;
}

/* Menus */
.menubar {
    display: flex;
    align-items: center;
    height: 23px;
    flex-shrink: 0;
    padding-left: 8px;
    padding-bottom: 2px;
}
.menu {
    display: flex;
    gap: 13px;
}
.used {
    color: #d6d884;
}
.pale {
    color: #e0e2b8;
}
.layout-bar {
    display: flex;
    align-items: center;
    margin-left: auto;
    padding-right: 3px;
}
.layout-bar label {
    margin-right: 6px;
}
.layout-bar .layout-label {
    margin-left: 31px;
}
.node-space {
    width: 167px;
}
.layout-select {
    width: 165px;
    margin-right: 4px;
}
select {
    appearance: none;
    height: 17px;
    padding: 0 14px 1px 7px;
    line-height: 14px;
    border-radius: 3px;
    background: #5a5a5a url("data:image/svg+xml,%3Csvg xmlns='http://www.w3.org/2000/svg' width='8' height='6'%3E%3Cpath d='M1 1l3 3 3-3' fill='none' stroke='%23e0e0e0' stroke-width='1.400'/%3E%3C/svg%3E") no-repeat right 4px center;
}
.field {
    width: 76px;
    height: 19px;
    flex-shrink: 0;
    padding: 0 14px 1px 4px;
    border: 1px solid #4a4a4a;
    border-radius: 4px 0 0 4px;
    color: #dcdcdc;
    background: #303030 url("data:image/svg+xml,%3Csvg xmlns='http://www.w3.org/2000/svg' width='7' height='13'%3E%3Cpath d='M.5 4l3-3 3 3M.5 9l3 3 3-3' fill='none' stroke='%23808080'/%3E%3C/svg%3E") no-repeat right 1px center;
}
.icon {
    width: 16px;
    height: 16px;
    color: #949494;
}
.icon svg {
    width: 16px;
    height: 16px;
}
.icon.bright {
    color: #b4b4b4;
}
.icon.dim {
    color: #626262;
}
.burger {
    width: 14px;
    height: 10px;
    color: #949494;
}
.burger.bright {
    color: #dedede;
}
.panel-head {
    display: flex;
    align-items: center;
    height: 23px;
    flex-shrink: 0;
    padding-left: 6px;
}
.panel-head .menu {
    margin-left: 10px;
}
.panel > .panel-head .menu {
    gap: 14px;
}
.head-icons {
    display: flex;
    gap: 4px;
    margin-left: auto;
}

/* Button groups */
.workspace {
    display: flex;
    flex: 1;
    min-height: 0;
}
.left-side {
    display: flex;
    flex-direction: column;
    flex: 1;
    min-width: 0;
    padding-right: 3px;
}
.toolbar {
    display: flex;
    gap: 3px;
    height: 42px;
    flex-shrink: 0;
    padding-top: 5px;
}
.grip {
    background-image: radial-gradient(circle, #777 1px, transparent 1px);
    background-size: 4px 4px;
    flex-shrink: 0;
}
.grip.tall {
    width: 5px;
    height: 32px;
}
.grip.small {
    height: 18px;
}
.grip.wide {
    width: 30px;
    height: 5px;
    margin-left: 2px;
}
.group {
    display: flex;
    gap: 1px;
    border-radius: 3px;
    overflow: hidden;
    flex-shrink: 0;
}
.group button {
    position: relative;
    display: grid;
    place-items: center;
    width: 35px;
    height: 34px;
    background-color: #5a5a5a;
}
.group button > svg {
    width: 32px;
    height: 32px;
}
.group button.on {
    background-color: #87a3cf;
}
.group button.hot {
    outline: 1px solid #d6d884;
    outline-offset: -1px;
}
.group button.filled {
    background-color: #d6d884;
}
.group button > .corner {
    position: absolute;
    right: 1px;
    bottom: 1px;
    width: 5px;
    height: 5px;
}
.toolbar .wide-gap {
    margin-left: 8px;
}
.psr {
    fill: #ee6231;
    font: bold 12px "Liberation Sans", sans-serif;
}
.axis-letter {
    fill: #111;
    text-anchor: middle;
    font: bold 19px "Liberation Sans", sans-serif;
}
.solo {
    fill: #111;
    text-anchor: middle;
    font: bold 20px "DejaVu Sans", sans-serif;
}
.light-gear {
    fill: #eee;
    color: #eee;
}
.dark-gear {
    fill: #1c1c1c;
    color: #1c1c1c;
}

/* Cube faces */
.tools {
    --top: #7c7c7c;
    --left: #888;
    --right: #555;
}
.cube-blue {
    --top: #a5d4ff;
    --left: #7dbdf7;
    --right: #5593cc;
}
.cube-green {
    --top: #5df2a4;
    --left: #45d98a;
    --right: #2fae69;
}
.cube-white {
    --top: #fff;
    --left: #ddd;
    --right: #aaa;
}
.cube-orange {
    --top: #ffb35c;
    --left: #f7982c;
    --right: #c9721a;
}
.cube-dim {
    --top: #8d8d8d;
    --left: #808080;
    --right: #707070;
}
.cube-faded {
    --top: #a5715c;
    --left: #777;
    --right: #666;
}
.cube-rim {
    --rim: #f08a2a;
}
.cube-top {
    --top: #f08a2a;
}
.ball-gray {
    --ball: #808080;
}
.ball-orange {
    --ball: #f08a2a;
}
.ball-white {
    --ball: #eee;
    --halo: #ee6231;
}
.grid-orange {
    --grid: #e0882e;
}

/* Left tool column */
.work-row {
    display: flex;
    flex: 1;
    min-height: 0;
}
.tools {
    display: flex;
    flex-direction: column;
    gap: 3px;
    width: 39px;
    flex-shrink: 0;
    padding: 1px 0 0 1px;
}
.tools .group {
    flex-direction: column;
    width: 34px;
}
.tools .group button {
    width: 34px;
    height: 35px;
}
.tools .apart {
    margin-bottom: 8px;
}

/* Viewport */
.centre {
    display: flex;
    flex-direction: column;
    flex: 1;
    min-width: 0;
}
.view-panel {
    display: flex;
    flex-direction: column;
    flex: 1;
    min-height: 0;
    border: 1px solid #4d4d4d;
    border-width: 1px 1px 0;
}
.view-panel .head-icons {
    padding-right: 1px;
}
.viewport {
    position: relative;
    flex: 1;
    min-height: 0;
    overflow: hidden;
    border: 1px solid #909090;
    color: #e8e8e8;
    background: linear-gradient(90deg, rgba(0, 0, 0, 0.25) 23px, transparent 23px calc(100% - 23px), rgba(0, 0, 0, 0.25) calc(100% - 23px)), linear-gradient(#4d4d4d, #3a3a3a);
}
.scene {
    width: 100%;
    height: 100%;
}
.hud {
    position: absolute;
    padding: 0 3px;
    border-radius: 2px;
    background-color: rgba(50, 50, 50, 0.5);
}
.hud.name {
    top: 1px;
    left: 1px;
}
.hud.camera {
    display: flex;
    align-items: center;
    top: 1px;
    left: 50%;
    transform: translateX(-50%);
}
.hud.camera svg {
    width: 14px;
    height: 14px;
}
.hud.spacing {
    right: 8px;
    bottom: 3px;
}
.axes {
    position: absolute;
    left: 24px;
    bottom: 20px;
    width: 44px;
    height: 48px;
    font-size: 10px;
}

/* Timeline */
.timeline {
    display: flex;
    align-items: center;
    height: 31px;
    flex-shrink: 0;
}
.timeline .field {
    width: 74px;
    margin-left: 7px;
}
.ruler-clip {
    flex: 1;
    min-width: 0;
    height: 31px;
    padding: 4px 6px 0 9px;
    overflow: hidden;
}
.ruler {
    position: relative;
    display: flex;
    justify-content: space-between;
    height: 24px;
    background:
        linear-gradient(90deg, #777 1px, transparent 1px) 0 1px / 30% 22px repeat-x,
        linear-gradient(90deg, #bbb 1px, transparent 1px) 0 20px / 5% 4px repeat-x,
        linear-gradient(90deg, #bbb 1px, transparent 1px) 0 20px / 1% 2px repeat-x,
        linear-gradient(#808080, #808080) 0 17px / 100% 1px no-repeat;
}
.ruler span {
    display: flex;
    justify-content: center;
    width: 0;
}
.ruler .first {
    width: 18px;
    margin-right: -18px;
    justify-content: flex-end;
    padding-right: 5px;
    color: #87a3cf;
}
.playhead {
    position: absolute;
    left: -4px;
    top: 1px;
    width: 9px;
    height: 16px;
    background-color: #87a3cf;
}
.marker {
    position: absolute;
    top: 16px;
    width: 13px;
    height: 6px;
    margin-left: -6px;
    border: 1px solid #eee;
    background-color: #b4b4b4;
}
.marker.start {
    left: 0;
}
.marker.mid {
    left: 50%;
}
.marker.end {
    left: 100%;
}
.transport {
    display: flex;
    align-items: center;
    height: 28px;
    flex-shrink: 0;
    margin-bottom: 3px;
}
.transport .grip {
    margin-right: 3px;
}
.range-bar {
    display: flex;
    align-items: center;
    gap: 6px;
    flex: 1;
    height: 17px;
    margin: 0 6px 0 7px;
    padding: 0 5px;
    border-radius: 3px;
    background-color: #5a5a5a;
    color: #dcdcdc;
}
.range-bar i {
    width: 4px;
    height: 11px;
    border: 1px solid #8a8a8a;
    border-width: 0 1px;
}
.range-bar .last {
    margin-left: auto;
}
.play-groups {
    display: flex;
    gap: 11px;
    margin-left: 11px;
}
.play-groups .tight {
    margin-left: -8px;
}
.play-groups button {
    width: 27px;
    height: 26px;
}
.play-groups button > svg {
    width: 25px;
    height: 25px;
}
.key-step {
    --bar: #eee;
}
.flip > svg {
    transform: scaleX(-1);
}

/* Material and coordinate managers */
.managers {
    display: flex;
    gap: 3px;
    height: 137px;
    flex-shrink: 0;
    margin-bottom: 4px;
}
.materials {
    flex: 1;
    border: 1px solid #4d4d4d;
}
.materials .panel-head {
    border-bottom: 1px solid #4d4d4d;
}
.coords {
    width: 329px;
    border: 1px solid #4d4d4d;
}
.coords-head, .coords-grid {
    display: grid;
    grid-template-columns: 11px 96px 12px 96px 12px minmax(0, 1fr);
    align-items: center;
}
.coords-head {
    grid-template-columns: 22px 101px 101px 1fr;
    height: 24px;
    padding-left: 5px;
    border-bottom: 1px solid #4d4d4d;
}
.coords-grid {
    padding: 6px 3px 0 2px;
    row-gap: 3px;
}
.coords-grid label {
    white-space: nowrap;
}
.coords-grid .field {
    width: 100%;
}
.coords-grid select, .apply {
    height: 18px;
    margin: 2px 2px 0 1px;
}
.cell-2 {
    grid-column: 2;
}
.cell-4 {
    grid-column: 4;
}
.cell-6 {
    grid-column: 6;
}
.apply {
    border-radius: 3px;
    background-color: #5a5a5a;
}
.statusbar {
    display: flex;
    align-items: center;
    height: 24px;
    flex-shrink: 0;
    padding-left: 4px;
    border: 1px solid #4d4d4d;
}

/* Docks on the right */
.right-side {
    display: flex;
    flex-direction: column;
    gap: 4px;
    width: 516px;
    flex-shrink: 0;
    padding-top: 4px;
}
.dock {
    display: flex;
}
.objects-dock {
    flex: 467;
}
.attributes-dock {
    flex: 558;
}
.panel {
    display: flex;
    flex-direction: column;
    flex: 1;
    min-width: 0;
    border: 1px solid #4d4d4d;
    border-right: none;
}
.panel > .panel-head {
    border-bottom: 1px solid #4d4d4d;
    padding-right: 2px;
}
.side-tabs {
    display: flex;
    flex-direction: column;
    gap: 3px;
    width: 23px;
    background-color: #323232;
}
.side-tabs button {
    writing-mode: vertical-rl;
    width: 21px;
    padding: 3px 0;
    color: #808080;
    line-height: 18px;
    text-align: left;
}
.side-tabs .current {
    padding: 5px 0;
    color: #e0e0e0;
    background-color: #3d3d3d;
    border-radius: 0 3px 3px 0;
    border: 1px solid #4d4d4d;
    border-left: none;
}

/* Object tree */
.tree {
    flex: 1;
    margin: 1px 2px 0 1px;
    padding: 0;
    list-style: none;
    border: 1px solid #4d4d4d;
    border-left: none;
    background: linear-gradient(90deg, transparent 109px, #4a4a4a 109px 110px, transparent 110px 148px, #4a4a4a 148px 150px, transparent 150px);
}
.tree li {
    display: flex;
    align-items: center;
    height: 20px;
}
.tree li:nth-child(odd) {
    background-color: #484848;
}
.node {
    display: flex;
    align-items: center;
    width: 113px;
}
.branch {
    width: 16px;
    height: 20px;
    fill: none;
    stroke: #999;
}
.branch.deep {
    width: 27px;
}
.branch .box {
    fill: #3d3d3d;
}
.obj {
    width: 15px;
    height: 16px;
    margin-right: 4px;
}
.node .active {
    color: #f5c431;
}
.node .field-name {
    color: #c27a35;
}
.layer {
    width: 12px;
    height: 12px;
    margin-right: 5px;
}
.flags {
    width: 18px;
    height: 14px;
    margin-right: 3px;
}
.tag {
    width: 16px;
    height: 16px;
}

/* Attribute panel */
.object-name {
    display: flex;
    align-items: center;
    gap: 5px;
    height: 29px;
    flex-shrink: 0;
    padding-left: 4px;
}
.object-name svg {
    width: 18px;
    height: 18px;
}
.tabs {
    display: flex;
    gap: 1px;
    width: 354px;
    margin-left: 2px;
}
.tabs button {
    position: relative;
    flex: 1 0 0;
    height: 18px;
    line-height: 18px;
    background-color: #5a5a5a;
}
.tabs button:first-child {
    border-radius: 3px 0 0 3px;
}
.tabs button:last-child {
    border-radius: 0 3px 3px 0;
}
.tabs .current {
    color: #111;
    background-color: #87a3cf;
}
.panel h2 {
    margin: 8px 0 4px 4px;
    font-size: 11px;
    line-height: 16px;
    color: #e8e8e8;
}
.panel h3 {
    display: flex;
    align-items: center;
    gap: 1px;
    height: 17px;
    flex-shrink: 0;
    margin: 0 4px 0 2px;
    padding-left: 10px;
    font-size: 11px;
    font-weight: normal;
    background-color: #4d4d4d;
}
.panel h3::before {
    content: "";
    border: 4px solid transparent;
    border-top: 4px solid #d0d0d0;
    border-bottom: none;
}
.block {
    position: relative;
    margin-bottom: 7px;
    padding: 2px 11px 0 11px;
}
.line {
    display: flex;
    align-items: center;
    height: 20px;
}
.line.tall {
    height: 22px;
}
.line label {
    margin-right: 4px;
    white-space: nowrap;
}
.key {
    width: 16px;
    height: 16px;
    flex-shrink: 0;
    margin-right: 7px;
    border-radius: 50%;
    background: radial-gradient(circle, #959595 0 4px, #272727 4px 6px, #737373 6px 8px);
}
* + .key {
    margin-left: 2px;
}
.line .name-s {
    width: 40px;
}
.line .name-m {
    width: 74px;
}
.line .name-l {
    width: 98px;
}
.columns {
    display: flex;
    gap: 3px;
}
.col-b {
    width: 177px;
}
.w-relative {
    width: 75px;
}
.w-node {
    width: 70px;
}
.w-fields {
    width: 100px;
}
.w-default {
    width: 79px;
}
input[type="checkbox"] {
    appearance: none;
    width: 13px;
    height: 13px;
    flex-shrink: 0;
    border: 1px solid #a0a0a0;
    border-radius: 2px;
}
input[type="checkbox"]:checked {
    background: #b4b4b4 url("data:image/svg+xml,%3Csvg xmlns='http://www.w3.org/2000/svg' width='11' height='11'%3E%3Cpath d='M2 6l2.500 2.500L9.500 3' fill='none' stroke='%23111' stroke-width='1.800'/%3E%3C/svg%3E") no-repeat center;
}
input[type="range"] {
    appearance: none;
    flex: 1;
    min-width: 0;
    height: 19px;
    border: 1px solid #4a4a4a;
    border-left: none;
    border-radius: 0 4px 4px 0;
    background: #303030 linear-gradient(#777, #777) no-repeat center bottom / 1px 4px;
}
input[type="range"]::-webkit-slider-thumb {
    appearance: none;
    width: 2px;
    height: 17px;
    background-color: #87a3cf;
}

/* Red dashed highlights */
.callout {
    position: absolute;
    z-index: 1;
    left: -4px;
    top: -6px;
    width: calc(100% + 8px);
    height: calc(100% + 14px);
    pointer-events: none;
}
.callout rect {
    width: calc(100% - 4px);
    height: calc(100% - 4px);
    fill: none;
    stroke: #f00;
    stroke-width: 3;
    stroke-dasharray: 12 6;
}
.block > .callout {
    left: 6px;
    top: -1px;
    width: 348px;
    height: calc(100% + 3px);
}
```
